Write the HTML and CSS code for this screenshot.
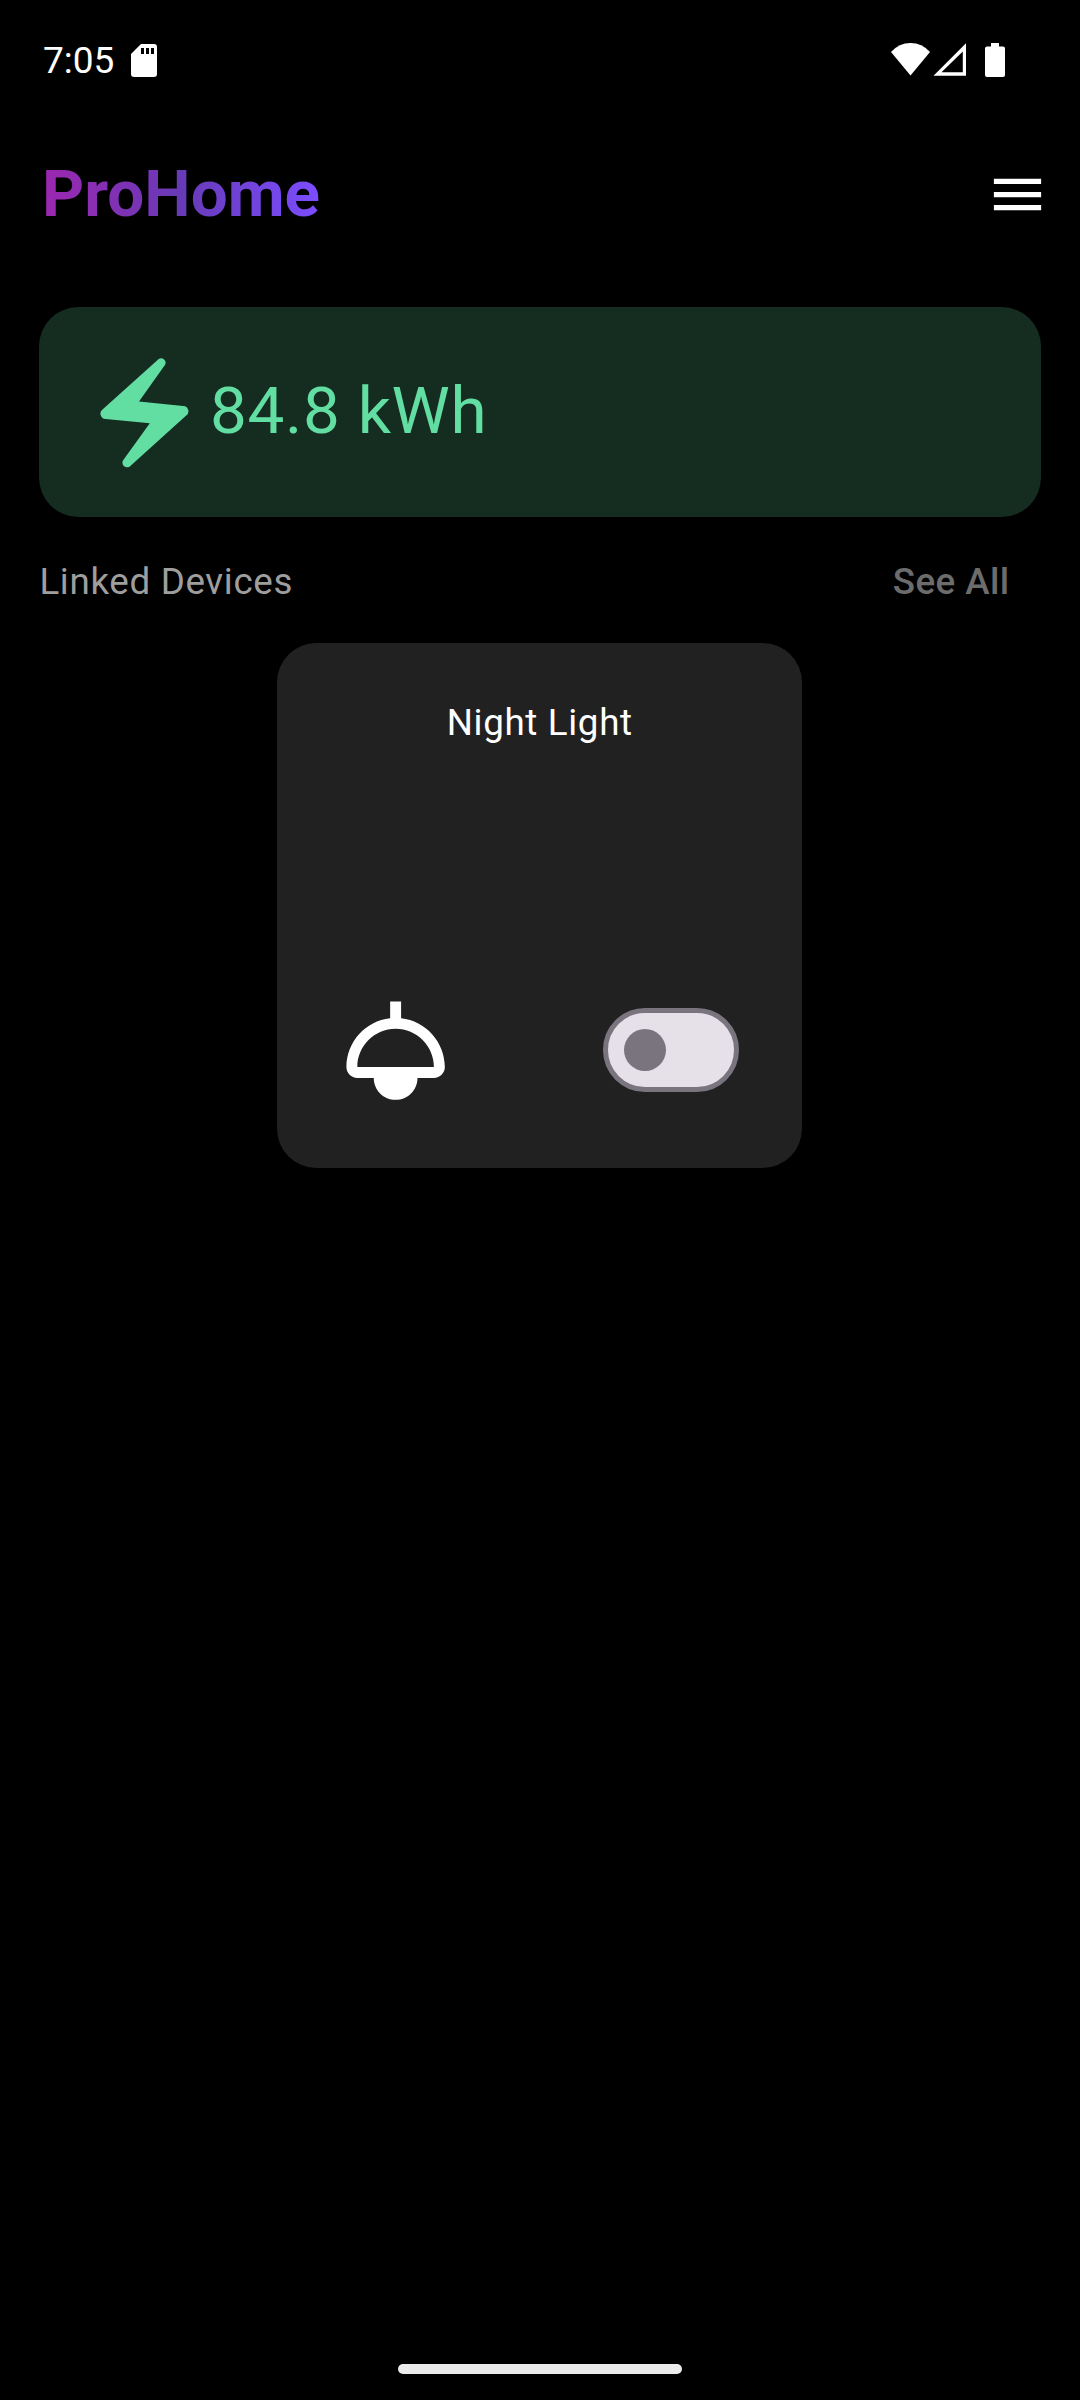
FILE: index.html
```html
<!DOCTYPE html>
<html lang="en">
<head>
<meta charset="utf-8">
<title>ProHome</title>
<link rel="stylesheet" href="styles.css">
</head>
<body>
<div class="screen">
  <div class="status">
    <span class="time">7:05</span>
    <svg class="sd" width="26" height="33" viewBox="0 0 26 33"><path fill="#fff" d="M10 0H23Q26 0 26 3V30Q26 33 23 33H3Q0 33 0 30V10Z"/><path d="M10 4h3v6h-3zM15 4h3v6h-3zM20 4h3v6h-3z"/></svg>
    <svg class="system" width="114" height="34" viewBox="0 0 114 34"><path fill="#fff" d="M0 9Q8 0 19.5 0T39 9L19.500 32.500Z"/><path fill="#fff" fill-rule="evenodd" d="M42.500 32.800L75 .3V32.800ZM50.500 29.300H71.800V8.500Z"/><path fill="#fff" d="M100 0h8v3.500h4q2 0 2 2V32q0 2-2 2H96q-2 0-2-2V5.500q0-2 2-2h4z"/></svg>
  </div>
  <header class="header">
    <h1 class="brand">ProHome</h1>
    <svg class="menu" width="63" height="63" viewBox="0 0 24 24"><path fill="#fff" d="M3 18h18v-2H3v2zm0-5h18v-2H3v2zm0-7v2h18V6H3z"/></svg>
  </header>
  <section class="energy">
    <svg width="90" height="112" viewBox="0 0 90 112"><path fill="#62dea3" d="M58.700 1.900A4.500 4.500 0 0 1 65.100 7.700L39 44.600L83.200 49A5.200 5.200 0 0 1 86.500 58.200L30.600 108.700A4.500 4.500 0 0 1 23.500 102.800L49.800 66.300L5.600 61.900A5.300 5.300 0 0 1 2.500 52.400Z"/></svg>
    <span class="reading">84.8 kWh</span>
  </section>
  <div class="section-head">
    <span class="linked">Linked Devices</span>
    <span class="all">See All</span>
  </div>
  <section class="device">
    <div class="name">Night Light</div>
    <div class="controls">
      <svg width="131.250" height="131.250" viewBox="0 0 24 24"><path fill="#fff" d="M13 6.060V3h-2v3.060C6.500 6.560 3 10.370 3 15c0 1.100.9 2 2 2h3c0 2.210 1.790 4 4 4s4-1.790 4-4h3c1.100 0 2-.9 2-2 0-4.630-3.500-8.440-8-8.940zM5 15c0-3.860 3.140-7 7-7s7 3.140 7 7H5z"/></svg>
      <div class="switch"><div class="thumb"></div></div>
    </div>
  </section>
  <div class="home-bar"></div>
</div>
</body>
</html>
```
FILE: styles.css
```css
* { box-sizing: border-box; }
body { margin: 0; background: #000; font-family: Roboto, sans-serif; color: #fff; }
svg { display: block; flex: none; }
.screen { width: 1080px; height: 2400px; display: flex; flex-direction: column; background: #000; }
.status { height: 120px; padding: 0 75px 0 43px; display: flex; align-items: center; }
.time { font-size: 37px; line-height: 121px; width: 88px; }
.sd { margin-top: 1px; }
.system { margin-left: auto; }
.header { height: 148px; padding: 0 31.5px 0 42px; display: flex; align-items: center; justify-content: space-between; }
.brand { margin: 0; font-size: 65.6px; line-height: 78px; font-weight: 700; background: linear-gradient(90deg, #9c27b0, #673ab7 50%, #7c4dff); -webkit-background-clip: text; background-clip: text; color: transparent; }
.menu { margin-top: 1px; }
.energy { margin: 39px 39.4px 0; height: 210px; border-radius: 39.4px; background: #152c21; display: flex; align-items: center; padding-left: 60.6px; }
.energy svg { margin-top: 1px; }
.reading { margin: 0 0 2px 20px; font-size: 65.6px; line-height: 78px; letter-spacing: 0.7px; color: #62dea3; }
.section-head { height: 126px; padding: 0 70.5px 0 39.4px; display: flex; justify-content: space-between; font-size: 36.75px; line-height: 129px; letter-spacing: 0.66px; }
.linked { color: #9e9e9e; }
.all { color: #6c6c6c; font-weight: 500; letter-spacing: 0.4px; }
.device { width: 525px; height: 525px; margin-left: 277.2px; border-radius: 39.4px; background: #212121; padding: 50px 0 52px; display: flex; flex-direction: column; justify-content: space-between; }
.name { text-align: center; font-size: 36.75px; line-height: 60px; letter-spacing: 0.66px; }
.controls { display: flex; align-items: center; justify-content: space-between; padding: 0 63.200px 0 52.700px; }
.switch { width: 136px; height: 84px; border: 5.250px solid #79747e; border-radius: 42px; background: #e6e0e9; display: flex; align-items: center; padding-left: 16px; }
.thumb { width: 42px; height: 42px; border-radius: 50%; background: #79747e; }
.home-bar { width: 284px; height: 10px; border-radius: 5px; background: #ebebeb; margin: auto auto 26px; }
```
